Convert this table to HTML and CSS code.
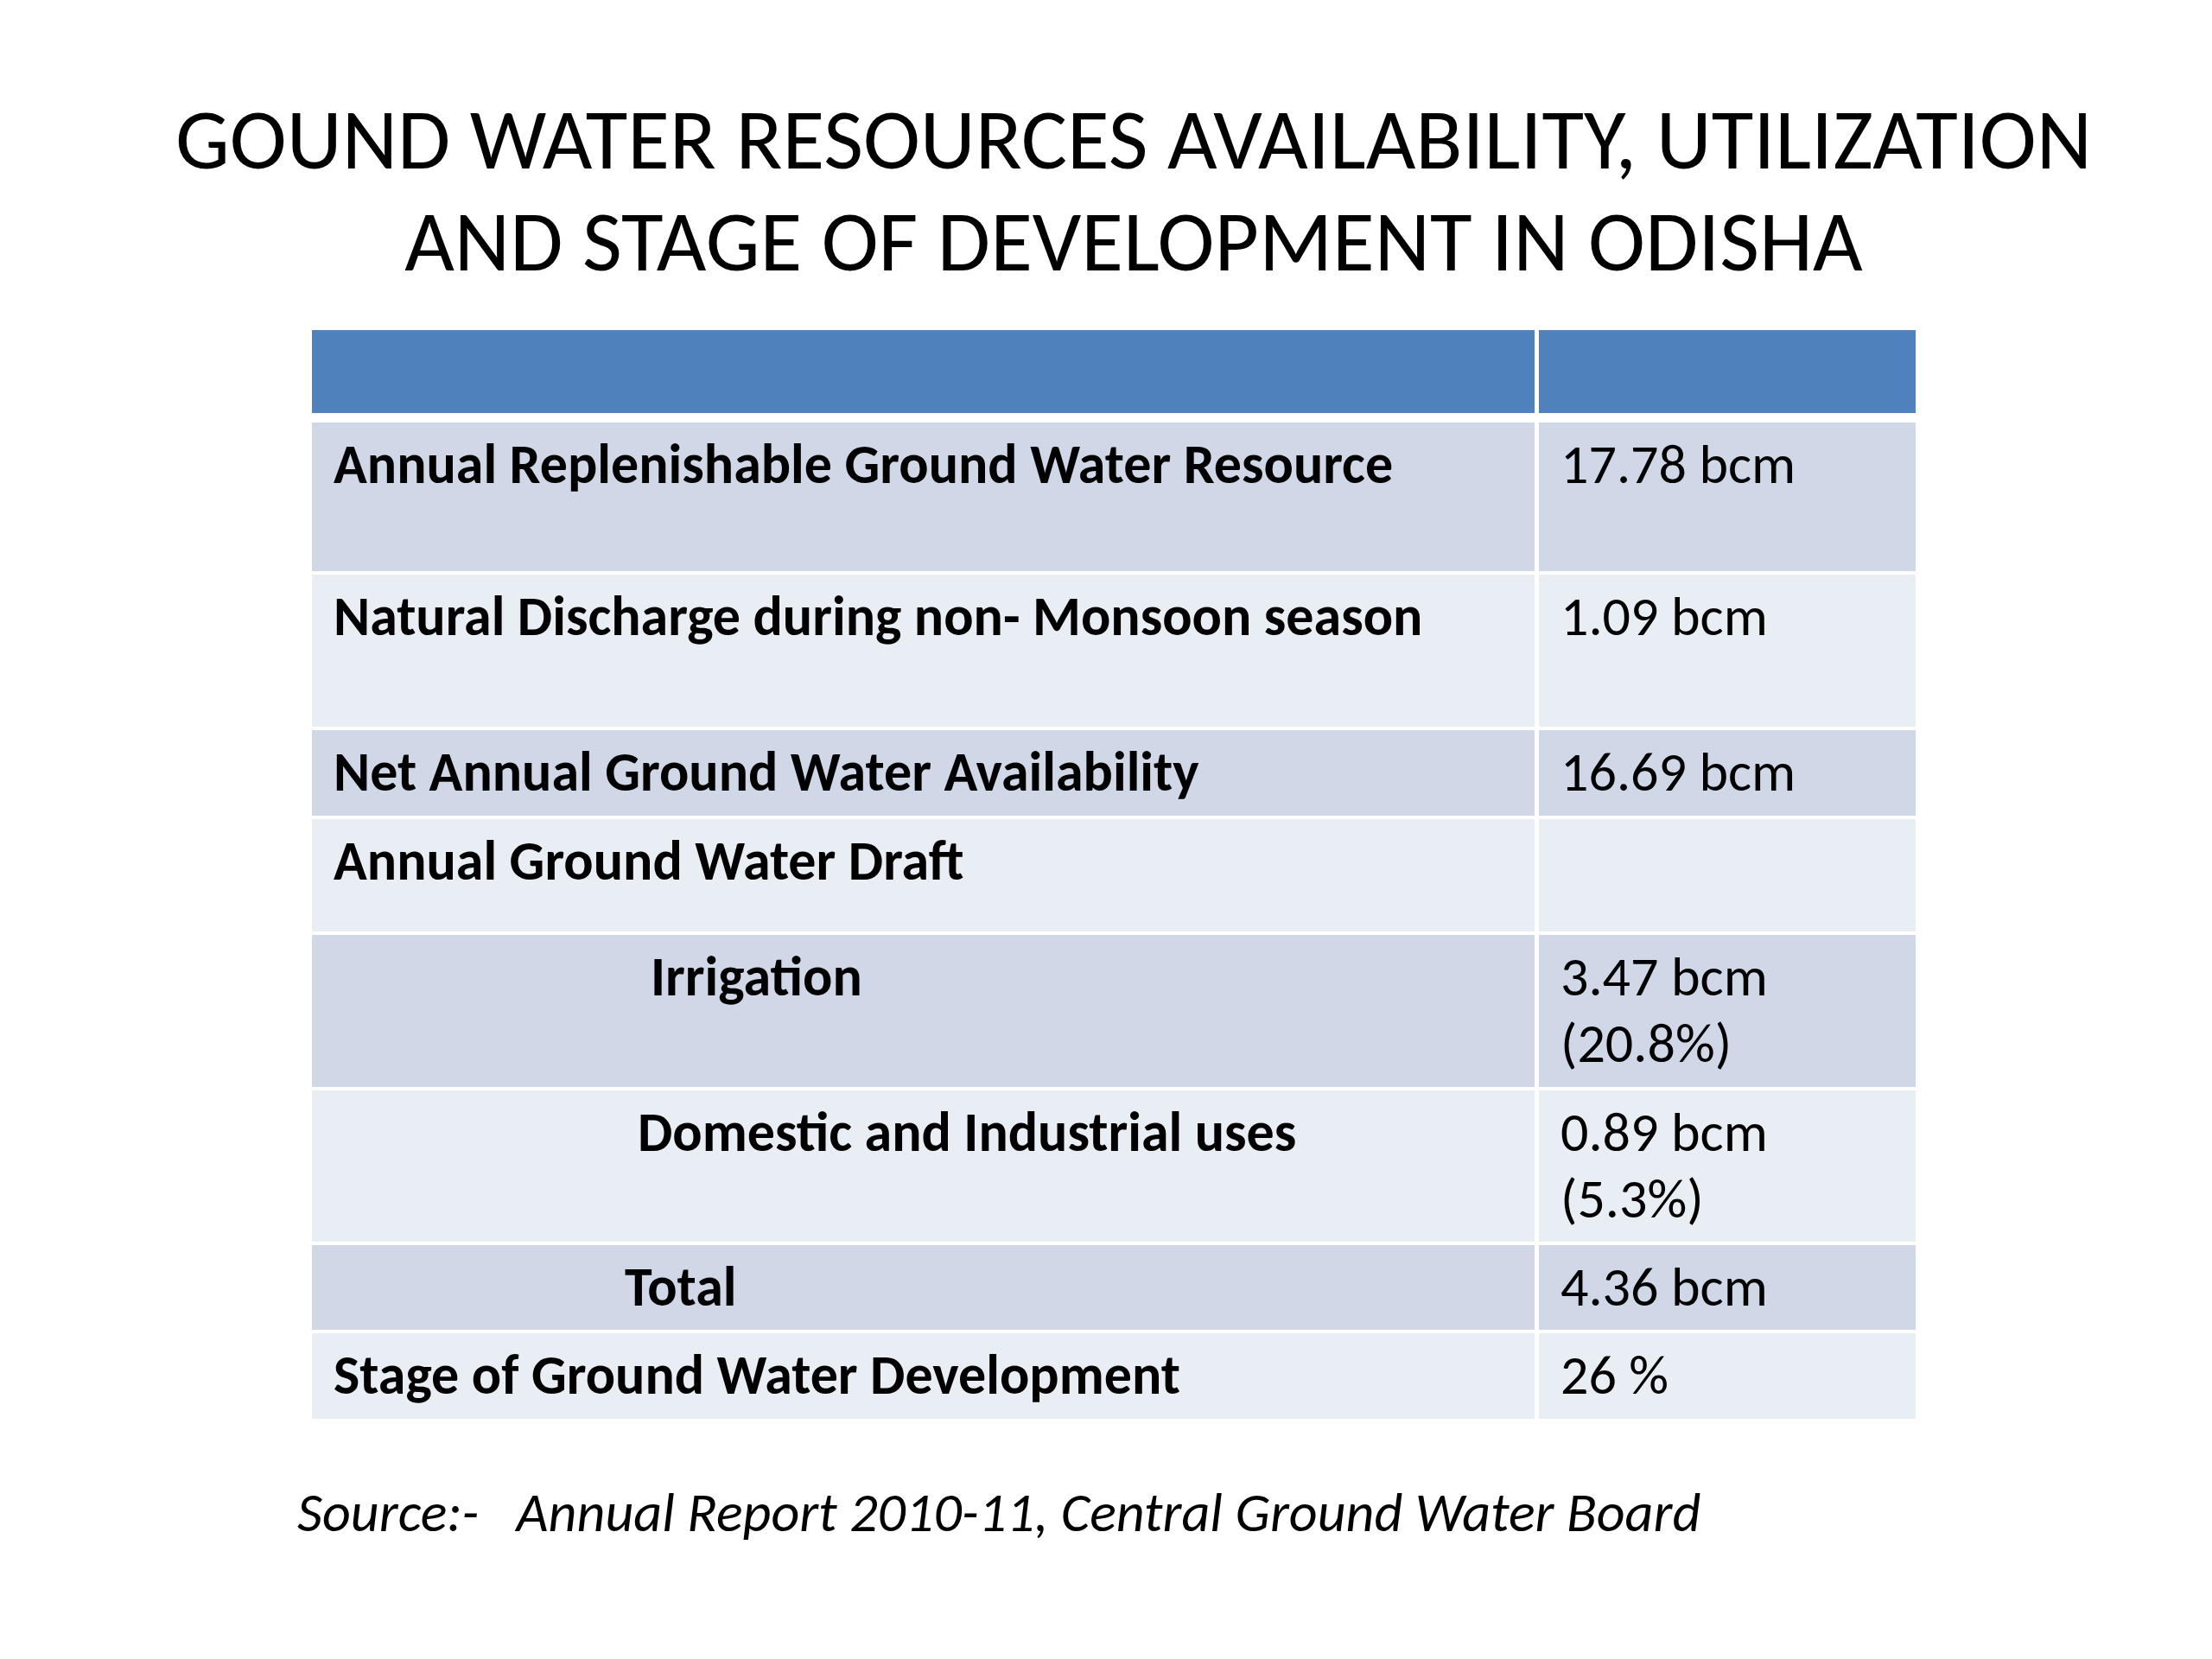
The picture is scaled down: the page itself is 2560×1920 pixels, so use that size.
FILE: index.html
```html
<!DOCTYPE html>
<html lang="en">
<head>
<meta charset="utf-8">
<title>Ground Water Resources – Odisha</title>
<link rel="stylesheet" href="styles.css">
</head>
<body>
<main class="slide">
  <h1 class="title">GOUND WATER RESOURCES AVAILABILITY, UTILIZATION<br>AND STAGE OF DEVELOPMENT IN ODISHA</h1>
  <div class="table">
    <div class="cell head"></div>
    <div class="cell head"></div>

    <div class="cell label odd">Annual Replenishable Ground Water Resource</div>
    <div class="cell value odd">17.78 bcm</div>

    <div class="cell label even">Natural Discharge during non- Monsoon season</div>
    <div class="cell value even">1.09 bcm</div>

    <div class="cell label odd">Net Annual Ground Water Availability</div>
    <div class="cell value odd">16.69 bcm</div>

    <div class="cell label even">Annual Ground Water Draft</div>
    <div class="cell value even"></div>

    <div class="cell label odd ind-irr">Irrigation</div>
    <div class="cell value odd">3.47 bcm<br>(20.8%)</div>

    <div class="cell label even ind-dom">Domestic and Industrial uses</div>
    <div class="cell value even">0.89 bcm<br>(5.3%)</div>

    <div class="cell label odd ind-tot">Total</div>
    <div class="cell value odd">4.36 bcm</div>

    <div class="cell label even">Stage of Ground Water Development</div>
    <div class="cell value even">26 %</div>
  </div>
  <p class="source">Source:-&nbsp;&nbsp; Annual Report 2010-11, Central Ground Water Board</p>
</main>
</body>
</html>
```
FILE: styles.css
```css
html, body {
  margin: 0;
  padding: 0;
  background: #ffffff;
}
body {
  font-family: Carlito, Calibri, Lato, "Open Sans", sans-serif;
  color: #000000;
}
.slide {
  width: 2560px;
  height: 1920px;
  box-sizing: border-box;
  padding-top: 102px;
  display: flex;
  flex-direction: column;
}
.title {
  margin: 0 0 0 64px;
  font-size: 99.6px;
  line-height: 118px;
  font-weight: 400;
  text-align: center;
  width: 2496px;
}
.table {
  margin: 44px 0 0 361px;
  width: 1856px;
  display: grid;
  grid-template-columns: 1415px 436px;
  grid-template-rows: 103px 172px 176px 99px 130px 176px 175px 98px 99px;
  column-gap: 5px;
  row-gap: 4px;
}
.cell {
  box-sizing: border-box;
  font-size: 64px;
  line-height: 77px;
  padding: 10px 25px 0 25px;
}
.head {
  background: #4f81bd;
  margin-bottom: 7px;
}
.odd { background: #d0d8e8; }
.even { background: #e9edf4; }
.label { font-weight: 700; }
.value { font-weight: 400; }
.ind-irr { padding-left: 392px; }
.ind-dom { padding-left: 377px; }
.ind-tot { padding-left: 362px; }
.source {
  margin: 70px 0 0 344px;
  font-size: 64px;
  line-height: 77px;
  font-style: italic;
}
```
